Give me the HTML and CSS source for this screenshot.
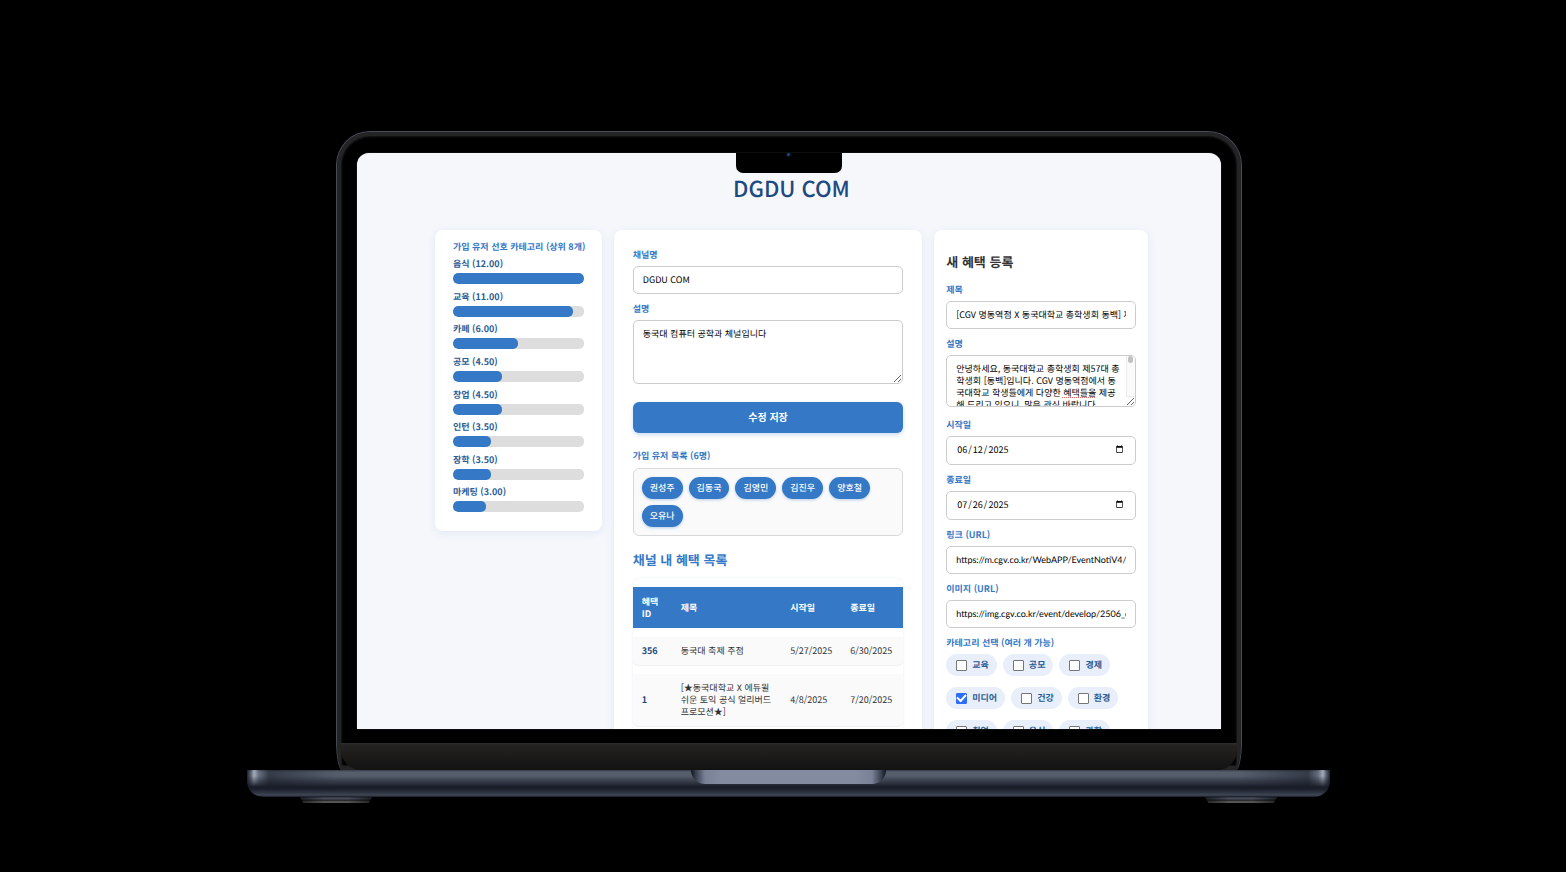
FILE: index.html
```html
<!DOCTYPE html>
<html lang="ko">
<head>
<meta charset="utf-8">
<title>DGDU COM</title>
<link rel="stylesheet" href="styles.css">
</head>
<body>
<div class="laptop">
  <div class="lid">
    <div class="screen">
      <main class="app">
        <h1 class="app-title">DGDU COM</h1>
        <div class="columns">
          <section class="card stats">
            <h2 class="label">가입 유저 선호 카테고리 (상위 8개)</h2>
            <ul class="bars">
              <li class="bar"><span>음식 (12.00)</span><div class="track"><div class="fill" style="width:100%"></div></div></li>
              <li class="bar"><span>교육 (11.00)</span><div class="track"><div class="fill" style="width:91.67%"></div></div></li>
              <li class="bar"><span>카페 (6.00)</span><div class="track"><div class="fill" style="width:50%"></div></div></li>
              <li class="bar"><span>공모 (4.50)</span><div class="track"><div class="fill" style="width:37.5%"></div></div></li>
              <li class="bar"><span>창업 (4.50)</span><div class="track"><div class="fill" style="width:37.5%"></div></div></li>
              <li class="bar"><span>인턴 (3.50)</span><div class="track"><div class="fill" style="width:29.17%"></div></div></li>
              <li class="bar"><span>장학 (3.50)</span><div class="track"><div class="fill" style="width:29.17%"></div></div></li>
              <li class="bar"><span>마케팅 (3.00)</span><div class="track"><div class="fill" style="width:25%"></div></div></li>
            </ul>
          </section>

          <section class="card channel">
            <label class="label" for="channel-name">채널명</label>
            <input class="field" id="channel-name" type="text" value="DGDU COM">
            <label class="label" for="channel-desc">설명</label>
            <textarea class="field channel-desc" id="channel-desc">동국대 컴퓨터 공학과 체널입니다</textarea>
            <button class="save" type="button">수정 저장</button>
            <h2 class="label">가입 유저 목록 (6명)</h2>
            <ul class="users">
              <li>권성주</li><li>김동국</li><li>김영민</li><li>김진우</li><li>양호철</li><li>오유나</li>
            </ul>
            <h2 class="heading list-heading">채널 내 혜택 목록</h2>
            <table class="benefits">
              <thead>
                <tr><th class="col-id">혜택 ID</th><th>제목</th><th class="col-start">시작일</th><th class="col-end">종료일</th></tr>
              </thead>
              <tbody>
                <tr><td class="id">356</td><td>동국대 축제 주점</td><td>5/27/2025</td><td>6/30/2025</td></tr>
                <tr><td class="id">1</td><td>[★동국대학교 X 에듀윌 쉬운 토익 공식 얼리버드 프로모션★]</td><td>4/8/2025</td><td>7/20/2025</td></tr>
              </tbody>
            </table>
          </section>

          <form class="card create">
            <h2 class="heading create-heading">새 혜택 등록</h2>
            <label class="label" for="title">제목</label>
            <input class="field" id="title" type="text" value="[CGV 명동역점 X 동국대학교 총학생회 동백] 제">
            <label class="label" for="desc">설명</label>
            <div class="desc-wrap">
              <textarea class="field desc" id="desc" spellcheck="false">안녕하세요, 동국대학교 총학생회 제57대 총
학생회 [동백]입니다. CGV 명동역점에서 동
국대학교 학생들에게 다양한 혜택들을 제공
해 드리고 있으니, 많은 관심 바랍니다.</textarea>
              <span class="scrollbar"></span>
              <span class="spelling"></span>
            </div>
            <label class="label" for="start">시작일</label>
            <input class="field date" id="start" type="date" value="2025-06-12">
            <label class="label" for="end">종료일</label>
            <input class="field date" id="end" type="date" value="2025-07-26">
            <label class="label" for="link">링크 (URL)</label>
            <input class="field url" id="link" type="text" value="https://m.cgv.co.kr/WebAPP/EventNotiV4/E">
            <label class="label" for="image">이미지 (URL)</label>
            <input class="field url" id="image" type="text" value="https://img.cgv.co.kr/event/develop/2506_c">
            <fieldset class="categories">
              <legend class="label">카테고리 선택 (여러 개 가능)</legend>
              <div class="tags">
                <label class="tag"><input type="checkbox">교육</label>
                <label class="tag"><input type="checkbox">공모</label>
                <label class="tag"><input type="checkbox">경제</label>
                <label class="tag"><input type="checkbox" checked>미디어</label>
                <label class="tag"><input type="checkbox">건강</label>
                <label class="tag"><input type="checkbox">환경</label>
                <label class="tag"><input type="checkbox">취업</label>
                <label class="tag"><input type="checkbox">음식</label>
                <label class="tag"><input type="checkbox">과학</label>
              </div>
            </fieldset>
          </form>
        </div>
      </main>
      <div class="notch"><span class="camera"></span></div>
    </div>
    <div class="chin"></div>
  </div>
  <div class="base"><div class="lip"></div></div>
  <div class="feet"><span class="foot"></span><span class="foot"></span></div>
</div>
</body>
</html>
```
FILE: styles.css
```css
* { box-sizing: border-box; }

body {
  margin: 0;
  min-height: 100vh;
  background: #000;
  font-family: "Noto Sans CJK KR", "Noto Sans", sans-serif;
  font-size: 9px;
  line-height: 12px;
  color: #333;
  text-rendering: geometricPrecision;
}

h1, h2, ul { margin: 0; padding: 0; }
ul { list-style: none; }

.laptop { padding: 131px 236px 0 247px; }

/* Lid and display */
.lid {
  margin: 0 88px 0 89px;
  padding: 21px 4px 0;
  border: 1px solid #484c59;
  border-bottom: 0;
  border-radius: 34px 34px 6px 6px / 34px 34px 30px 30px;
  background: #000;
  box-shadow: inset 0 0 0 4px #242424, inset 0 0 2px 5px #17181b;
}

.screen {
  position: relative;
  margin: 0 16px;
  aspect-ratio: 3 / 2;
  overflow: hidden;
  border-radius: 12px 12px 0 0;
  background: #f5f7fb;
  box-shadow: 0 0 1px #8a8d94;
}

.notch {
  position: absolute;
  top: 0;
  left: 50%;
  width: 106px;
  height: 20px;
  margin-left: -53px;
  border-radius: 0 0 7px 7px;
  background: #000;
}

.camera {
  position: absolute;
  top: 0;
  left: 50%;
  width: 3px;
  height: 3px;
  margin-left: -2px;
  border-radius: 50%;
  background: #1d4a80;
  box-shadow: 0 0 2px 1px #0b1522;
}

.chin {
  height: 27px;
  margin-top: 14px;
  border-radius: 0 0 20px 20px;
  background: linear-gradient(#302f2d 0, #242321 2px, #1a1918 60%, #121212);
}

/* Keyboard deck */
.base {
  height: 27px;
  border-radius: 0 0 16px 16px;
  background:
    linear-gradient(rgba(23, 28, 39, 0) 0, rgba(23, 28, 39, 0) 6px, rgba(23, 28, 39, .8) 15px, #171c27 17px, #1a1f2b 19px, #363d4b 24px, #424958 25px, #161a23 27px),
    linear-gradient(90deg, #1b202c 0, rgba(150, 156, 174, .15) 4px, rgba(190, 196, 214, .75) 7px, rgba(150, 156, 174, .25) 12px, rgba(20, 25, 36, .5) 22px, transparent 90px, transparent calc(100% - 90px), rgba(20, 25, 36, .5) calc(100% - 22px), rgba(150, 156, 174, .25) calc(100% - 12px), rgba(190, 196, 214, .75) calc(100% - 7px), rgba(150, 156, 174, .15) calc(100% - 4px), #1b202c 100%),
    linear-gradient(#363b47 0, #565e6c 2px, #4f5765 27px);
}

.lip {
  width: 195px;
  height: 14px;
  margin: 0 auto;
  border-radius: 0 0 14px 14px;
  background: linear-gradient(90deg, #10151f 0, #3a4150 5px, #788196 14px, #828b9f 30px, #828b9f calc(100% - 30px), #788196 calc(100% - 14px), #3a4150 calc(100% - 5px), #10151f 100%);
}

.feet {
  display: flex;
  justify-content: space-between;
  padding: 0 53px;
}

.foot {
  width: 72px;
  height: 6px;
  background:
    linear-gradient(90deg, rgba(0, 0, 0, .6) 0, transparent 24px, transparent 48px, rgba(0, 0, 0, .6) 72px),
    linear-gradient(#2c323e 0, #4d5563 2px, #1d1e21 3px, #3a3a3b 4px, #6a6864 5px, #444 6px);
  clip-path: polygon(0 0, 100% 0, 95% 100%, 5% 100%);
}

/* Application */
.app { padding: 19px 73px 0 78px; }

.app-title {
  font-size: 22px;
  line-height: 32px;
  font-weight: 500;
  text-align: center;
  color: #1d4a80;
}

.columns {
  display: grid;
  grid-template-columns: 167fr 309fr 214fr;
  gap: 12px;
  align-items: start;
  margin-top: 26px;
}

.card {
  min-width: 0;
  border-radius: 8px;
  background: #fff;
  box-shadow: 0 2px 8px rgba(52, 120, 198, .1);
}

.label {
  display: block;
  padding: 0;
  font-size: 9px;
  line-height: 14px;
  font-weight: 600;
  color: #3478c6;
  white-space: nowrap;
}

.heading { font-size: 13px; line-height: 20px; font-weight: 600; }

.stats { padding: 10px 18px 13px; }

.bars {
  display: grid;
  grid-auto-rows: 1fr;
  min-height: 261px;
  margin-top: 3px;
  line-height: 14px;
  font-weight: 600;
  color: #2a5c96;
}

.track {
  height: 11px;
  margin-top: 2px;
  overflow: hidden;
  border-radius: 5px;
  background: #ddd;
}

.fill { height: 100%; border-radius: 5px; background: #3478c6; }

.field {
  display: block;
  width: 100%;
  height: 28px;
  margin: 4px 0 8px;
  padding: 0 9px 2px;
  border: 1px solid #ccc;
  border-radius: 5px;
  background: #fff;
  font: inherit;
  color: #000;
  text-rendering: inherit;
}

.date { height: 29px; }
.field.url { font-family: Lato, "Noto Sans", sans-serif; }

textarea.field { padding-top: 7px; overflow: hidden; resize: vertical; }

.channel { padding: 18px 19px 24px; }
.channel-desc.field { height: 64px; margin-bottom: 18px; }

.save {
  display: block;
  width: 100%;
  height: 31px;
  margin-bottom: 16px;
  padding: 0 0 2px;
  border: 0;
  border-radius: 6px;
  background: #3478c6;
  box-shadow: 0 2px 4px rgba(52, 120, 198, .25);
  font: inherit;
  font-size: 10px;
  font-weight: 600;
  color: #fff;
}

.users {
  display: flex;
  flex-wrap: wrap;
  gap: 6px;
  margin-top: 5px;
  padding: 8px;
  border: 1px solid #d8d8d8;
  border-radius: 6px;
  background: #fafafa;
}

.users li {
  padding: 0 8px;
  border-radius: 11px;
  background: #3478c6;
  box-shadow: 0 1px 3px rgba(52, 120, 198, .35);
  line-height: 22px;
  font-weight: 500;
  color: #fff;
}

.list-heading { margin-top: 14px; color: #3478c6; }

.benefits {
  width: 100%;
  margin-top: 8px;
  border-collapse: separate;
  border-spacing: 0 9px;
  border-radius: 8px;
  box-shadow: 0 0 3px rgba(52, 120, 198, .12);
}

.benefits th, .benefits td { padding: 8px 9px; text-align: left; }
.benefits th { padding-top: 9px; background: #3478c6; font-weight: 600; color: #fff; }
.benefits td { background: #fafafa; box-shadow: 0 1px 0 #eef0f4; }
.benefits td:first-child { border-bottom-left-radius: 5px; }
.benefits td:last-child { border-bottom-right-radius: 5px; }
.benefits .id { font-weight: 600; color: #1d4a80; }
.col-id { width: 39px; }
.col-start { width: 60px; }
.col-end { width: 62px; }

.create { padding: 22px 12px 24px; }
.create-heading { margin-bottom: 11px; color: #333; }

.desc-wrap { position: relative; margin-bottom: 11px; }
.desc.field { height: 52px; margin-bottom: 0; padding-right: 0; white-space: pre; }

.scrollbar {
  position: absolute;
  top: 1px;
  right: 1px;
  width: 9px;
  height: 41px;
  border-left: 1px solid #ececec;
  border-bottom: 1px solid #ececec;
  border-radius: 0 4px 0 0;
  background: #fafafa;
}

.scrollbar::before {
  content: "";
  position: absolute;
  top: 0;
  right: 2px;
  width: 5px;
  height: 7px;
  border-radius: 3px;
  background: #c1c1c1;
}

.spelling {
  position: absolute;
  top: 42px;
  left: 116px;
  width: 33px;
  border-top: 1px dotted #f0605a;
}

.categories { min-width: 0; margin: 0; padding: 0; border: 0; }

.tags { display: flex; flex-wrap: wrap; gap: 11px 6px; margin-top: 4px; }

.tag {
  display: flex;
  align-items: center;
  gap: 5px;
  padding: 0 8px 0 10px;
  border-radius: 11px;
  background: #e8effb;
  line-height: 22px;
  font-weight: 600;
  color: #2a5c96;
}

.tag input {
  display: grid;
  place-items: center;
  width: 11px;
  height: 11px;
  margin: 0;
  appearance: none;
  border: 1px solid #767676;
  border-radius: 1px;
  background: #fff;
}

.tag input:checked { border-color: #2f6df6; background: #2f6df6; }

.tag input:checked::before {
  content: "";
  width: 7px;
  height: 4px;
  margin-bottom: 2px;
  border: solid #fff;
  border-width: 0 0 2px 2px;
  transform: rotate(-48deg);
}
```
